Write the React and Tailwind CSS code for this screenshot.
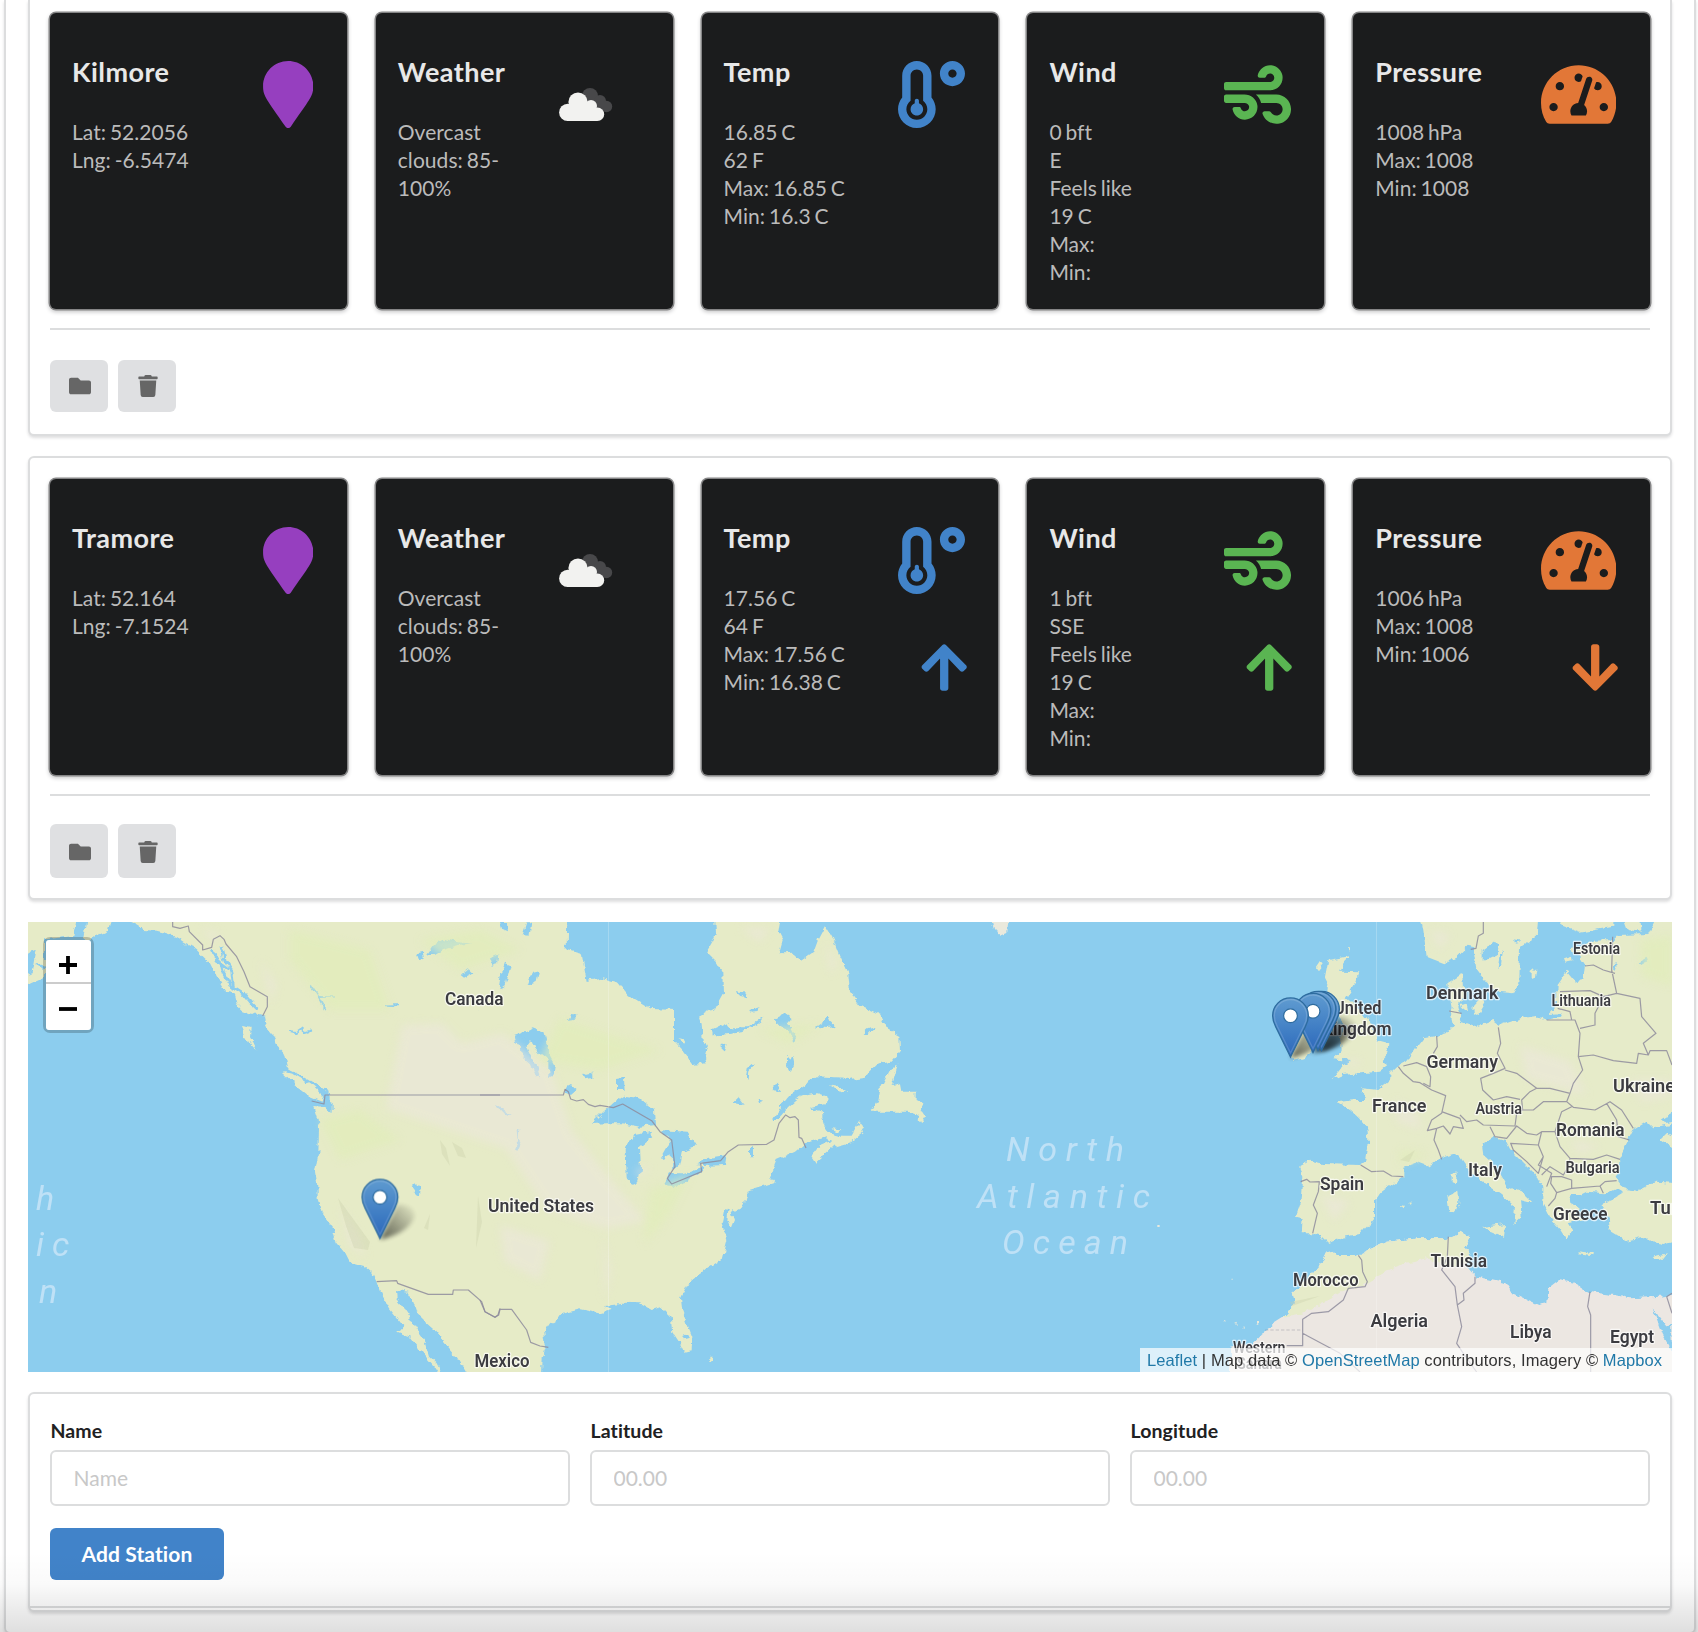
import React from "react";
import {
  FaArrowDown,
  FaArrowUp,
  FaFolder,
  FaMapMarker,
  FaTachometerAlt,
  FaTemperatureLow,
  FaTrash,
  FaWind,
} from "react-icons/fa";

const stations = [
  {
    name: "Kilmore",
    panel: "h-[436px] border-t-0 pt-[13px] rounded-b-[6px]",
    actions: "mt-[30px] h-[52px]",
    icon: "",
    location: ["Lat: 52.2056", "Lng: -6.5474"],
    temp: ["16.85 C", "62 F", "Max: 16.85 C", "Min: 16.3 C"],
    wind: ["0 bft", "E", "Feels like", "19 C", "Max:", "Min:"],
    pressure: ["1008 hPa", "Max: 1008", "Min: 1008"],
    trends: false,
  },
  {
    name: "Tramore",
    panel: "mt-5 h-[444px] pt-[21px] rounded-[6px]",
    actions: "mt-[28px] h-[54px]",
    icon: "mt-[2px]",
    location: ["Lat: 52.164", "Lng: -7.1524"],
    temp: ["17.56 C", "64 F", "Max: 17.56 C", "Min: 16.38 C"],
    wind: ["1 bft", "SSE", "Feels like", "19 C", "Max:", "Min:"],
    pressure: ["1006 hPa", "Max: 1008", "Min: 1006"],
    trends: true,
  },
];

const weather = ["Overcast", "clouds: 85-", "100%"];

function CloudIcon() {
  return (
    <svg viewBox="0 0 54 34" className="mt-[27px] mr-[26px] h-[34px] w-[54px]">
      <g fill="#48484a">
        <circle cx="31" cy="8" r="8" />
        <circle cx="41" cy="13" r="6" />
        <circle cx="47.5" cy="18.5" r="5.7" />
        <path d="M30 12h14v12H30z" />
      </g>
      <g fill="#f2f2f0">
        <circle cx="19" cy="14" r="9.6" />
        <circle cx="8.7" cy="24.4" r="8.6" />
        <circle cx="32" cy="18" r="6" />
        <circle cx="38.4" cy="26.2" r="6.8" />
        <path d="M8 16h22l8 10v7H8z" />
      </g>
    </svg>
  );
}

function Card({ title, lines, icon, trend }) {
  return (
    <div className="flex h-[296px] justify-between rounded-[6px] bg-[#1b1c1d] pl-[22px] pr-[33.5px] shadow-[0_0_0_1.5px_#858586,0_2px_4px_1px_#c4c4c5]">
      <div className="pt-[41px]">
        <h2 className="text-[27px] leading-[35px] font-bold tracking-[0.45px] text-[#e8e8e8]">{title}</h2>
        <div className="mt-[29px] text-[21px] leading-[28px] [word-spacing:-1.6px] tracking-[0.05px] whitespace-nowrap text-[#bbbbbb]">
          {lines.map((line) => (
            <p key={line}>{line}</p>
          ))}
        </div>
      </div>
      <div className="flex flex-col items-end pt-[48px]">
        {icon}
        {trend}
      </div>
    </div>
  );
}

function Station({ s }) {
  return (
    <section className={`border-2 border-[#dcddde] bg-white px-5 shadow-[0_2px_3px_0_rgba(34,36,38,0.15)] ${s.panel}`}>
      <div className="grid grid-cols-5 gap-[29px]">
        <Card title={s.name} lines={s.location} icon={<FaMapMarker className="h-[67px] w-[50.4px] text-[#963fbf]" />} />
        <Card title="Weather" lines={weather} icon={<CloudIcon />} />
        <Card
          title="Temp"
          lines={s.temp}
          icon={<FaTemperatureLow className="h-[67px] w-[67px] text-[#4183c9]" />}
          trend={s.trends && <FaArrowUp className="-mr-[2px] mt-[47px] h-[53px] w-[46.4px] text-[#4183c9]" />}
        />
        <Card
          title="Wind"
          lines={s.wind}
          icon={<FaWind className="h-[67px] w-[67px] text-[#5ab552]" />}
          trend={s.trends && <FaArrowUp className="-mr-[2px] mt-[47px] h-[53px] w-[46.4px] text-[#5ab552]" />}
        />
        <Card
          title="Pressure"
          lines={s.pressure}
          icon={<FaTachometerAlt className="h-[67px] w-[75.4px] text-[#e27737]" />}
          trend={s.trends && <FaArrowDown className="-mr-[2px] mt-[47px] h-[53px] w-[46.4px] text-[#e27737]" />}
        />
      </div>
      <div className="mt-[19px] h-[2px] bg-[#dcddde]" />
      <div className={`flex gap-[10px] ${s.actions}`}>
        {[FaFolder, FaTrash].map((Icon, i) => (
          <button
            key={i}
            className="flex w-[58px] items-center justify-center rounded-[6px] bg-[#dfe0e2] pl-[1px] text-[#666666]"
          >
            <Icon className={`h-[22px] w-[22px] ${s.icon}`} />
          </button>
        ))}
      </div>
    </section>
  );
}

/* Country labels: text, left, right, baseline, font size */
const labels = [
  ["Canada", 445, 503.5, 1004.500, 19],
  ["United States", 488, 594, 1211.500, 19],
  ["Mexico", 474.5, 529.5, 1367, 19],
  ["Estonia", 1573, 1620, 954, 16],
  ["Denmark", 1426, 1498.5, 999, 19],
  ["Lithuania", 1551.5, 1611, 1006, 16],
  ["United", 1334, 1381.5, 1014, 19],
  ["Kingdom", 1322, 1391.5, 1035, 19],
  ["Germany", 1426.5, 1498, 1068, 19],
  ["Ukraine", 1613, 1675, 1092, 19],
  ["France", 1372, 1426.5, 1111.5, 19],
  ["Austria", 1475.5, 1522, 1114, 16],
  ["Romania", 1556, 1624.5, 1136, 19],
  ["Italy", 1468, 1502, 1176, 19],
  ["Bulgaria", 1565.5, 1619.5, 1173, 16],
  ["Spain", 1320, 1364, 1190, 19],
  ["Greece", 1553, 1607.5, 1220, 19],
  ["Turkey", 1650, 1706, 1214, 19],
  ["Tunisia", 1430.5, 1487, 1267, 19],
  ["Morocco", 1293, 1358.5, 1285.5, 19],
  ["Algeria", 1370.5, 1428, 1327, 19],
  ["Libya", 1510, 1551.5, 1337.5, 19],
  ["Egypt", 1610, 1654, 1343, 19],
  ["Western", 1233, 1285.5, 1353, 16],
  ["Sahara", 1237, 1282, 1369, 16],
];

const oceanLabels = [
  ["North", 1006, 1124, 1160.5],
  ["Atlantic", 977, 1150, 1207.5],
  ["Ocean", 1002, 1128, 1254],
];

function Pin({ x, y }) {
  return (
    <g transform={`translate(${x - 18.75} ${y - 61}) scale(1.5)`}>
      <path
        d="M12.5.6C5.9.6.6 5.9.6 12.5c0 2.800.8 5 2 7.300L12.5 40l9.900-20.200c1.200-2.300 2-4.500 2-7.300C24.400 5.900 19.100.6 12.500.6z"
        fill="url(#pinFill)"
        stroke="#2e6c9f"
        strokeWidth="0.9"
      />
      <path
        d="M12.5 1.700C6.500 1.700 1.700 6.500 1.700 12.500c0 2.600.7 4.700 1.900 6.800l8.900 18 8.900-18c1.200-2.100 1.900-4.200 1.900-6.800 0-6-4.800-10.800-10.800-10.800z"
        fill="none"
        stroke="#fff"
        strokeOpacity="0.15"
        strokeWidth="0.9"
      />
      <circle cx="12.5" cy="12.500" r="4.600" fill="#fff" stroke="#2e6c9f" strokeWidth="0.8" />
    </g>
  );
}

function PinShadow({ x, y }) {
  return (
    <path
      transform={`translate(${x} ${y})`}
      d="M0 0L17-34C28-36 36-30 34-22C30-10 14-3 0 0z"
      fill="url(#shade)"
      filter="url(#soft)"
    />
  );
}

function WorldMap() {
  const pins = [
    [1321.500, 1051.500],
    [1318, 1051.500],
    [1313, 1053.500],
    [1290.500, 1058],
    [380, 1239.500],
  ];
  return (
    <svg viewBox="28 922 1644 450" className="block h-[450px] w-[1644px]">
      <defs>
        <linearGradient id="pinFill" x1="0" y1="0" x2="0" y2="1">
          <stop offset="0" stopColor="#5f9bd0" />
          <stop offset="0.6" stopColor="#3f7dc4" />
          <stop offset="1" stopColor="#2d67ba" />
        </linearGradient>
        <linearGradient id="shade" x1="0" y1="1" x2="0.9" y2="0.1">
          <stop offset="0" stopColor="#000" stopOpacity="0.75" />
          <stop offset="1" stopColor="#000" stopOpacity="0.08" />
        </linearGradient>
        <filter id="soft" x="-50%" y="-50%" width="200%" height="200%">
          <feGaussianBlur stdDeviation="2" />
        </filter>
        <filter id="haze" x="-20%" y="-20%" width="140%" height="140%">
          <feGaussianBlur stdDeviation="4" />
        </filter>
        <filter id="coast" filterUnits="userSpaceOnUse" x="0" y="0" width="1700" height="1500">
          <feTurbulence type="fractalNoise" baseFrequency="0.12" numOctaves="3" seed="4" />
          <feDisplacementMap in="SourceGraphic" scale="7" xChannelSelector="R" yChannelSelector="G" />
        </filter>
      </defs>
      <rect x="28" y="922" width="1644" height="450" fill="#8ccdee" />

      <g filter="url(#coast)">
        {/* Western North America */}
        <g transform="translate(20 910) scale(.33333)" fill="#e6ebc7">
          <path d="M330 20L345 45 370 60 410 62 440 70 465 78 490 95 510 105 530 120 550 140 570 160 585 190 600 215 618 245 640 250 650 285 665 300 690 310 725 318 735 350 760 380 770 405 790 425 800 470 830 490 865 510 920 545 938 580 938 612 915 590 880 588 893 630 897 660 895 730 885 785 893 830 893 870 905 908 935 945 950 1000 975 1030 988 1055 1035 1068 1060 1090 1070 1110 1085 1150 1110 1195 1150 1245 1132 1265 1170 1280 1200 1320 1240 1365 1262 1400 1270 1400 1250 1360 1230 1340 1215 1290 1190 1255 1170 1220 1150 1190 1130 1165 1128 1140 1165 1145 1180 1170 1195 1215 1240 1255 1275 1300 1310 1340 1345 1400 1440 1400 1440 20z" />
          <path d="M785 488l25-3 40 25 30 20 32 30-4 15-38-15-50-40zM663 345l29 5-2 35 10 15 12 25-22-25-15-25z" />
          <path d="M0 20H172L160 75 120 80 75 85V200L0 235zM200 20H275L265 62 230 75 205 95 190 85z" />
          <path d="M24 125l26-5-12 70-38 10zM50 160l26 8-8 12z" fill="#8ccdee" />
          <g fill="none" stroke="#8ccdee" strokeWidth="9" strokeLinejoin="round">
            <path d="M570 125l30 25 10 40 30 50M603 105l12 45 20 30 5 50 30 20 25 30 20 20M585 150l40 30M700 310l40 50 15 18M790 480l35 8M870 515l45 30M728 320l8 40" />
            <path d="M872 222l20 30 24 45M895 258h50M1098 286h36M805 363l25 3 12-8 14 12 20-6" strokeWidth="6" />
          </g>
          <g fill="#8ccdee">
            <path d="M1222 135l20-30 30-18 40 10 48 6-50 5-40 12-25 15zM1190 130l18-5 4 20-14 8zM1325 195l20-16 12 12-22 12zM1400 40l15-4-8 16zM1415 150l25-20v35l-20-4zM1375 300l20-14 8 14-14 10zM1430 215h12v25h-12zM1172 828l12-8 4 12 14 2-2 22-12-3-8-15z" />
          </g>
        </g>
        {/* Eastern North America */}
        <g transform="translate(480 910) scale(.33333)" fill="#e6ebc7">
          <path d="M-5 20H262L260 120 305 132 320 213 360 203 415 218 445 255 515 297 582 300V395L610 425 640 465 672 460 682 420 668 390 665 345 657 320 710 290 732 250 730 190 710 155 680 125 700 90 708 70 705 20H902L895 65 908 90 897 130 935 128 960 152 1000 125 1015 85 1035 48 1060 90 1080 140 1105 190 1110 245 1145 290 1200 315 1222 355 1258 375 1260 425 1235 455 1190 465 1155 500 1110 507 1010 502 970 525 935 550 905 585 878 630 888 630 925 590 960 560 1010 550 1040 560 1038 580 990 592 1025 605 1030 640 1050 670 1085 680 1115 680 1140 635 1152 665 1115 695 1060 710 1010 755 997 735 1020 705 1055 690 1035 682 975 700 945 725 890 750 870 800 885 820 800 845 790 890 762 905 752 900 762 930 752 955 742 930 745 905 733 900 725 940 735 970 742 990 728 1045 680 1075 625 1120 603 1165 607 1200 625 1250 637 1280 635 1320 612 1325 600 1300 580 1270 575 1220 545 1190 515 1200 480 1180 430 1178 375 1185 395 1200 360 1210 300 1198 255 1210 210 1240 190 1270 195 1310 185 1340 183 1400H-5z" />
          <path d="M1255 457L1240 510 1235 525 1260 520 1265 545 1310 545 1310 570 1330 580 1325 600 1338 620 1325 640 1310 610 1280 605 1175 605 1195 570 1200 540 1225 490zM1043 523l32 5 30 17-20 2zM1057 655l30 3-10 8zM592 388l25 3-5 8zM688 1340h8v14h-8z" />
          <g fill="#8ccdee">
            <path d="M333 642L370 605 405 575 430 557 480 565 522 600 525 645 480 650 425 640 380 640z" />
            <path d="M437 720L460 675 515 665V680L480 710 483 780 475 815 455 825 440 800z" />
            <path d="M540 660L620 665 648 712 605 725 597 770 577 775 575 730 545 750 540 745 560 710 575 690z" />
            <path d="M553 820L570 790 605 790 670 770 665 785 595 830 560 830zM650 765L680 745 740 735 735 765 670 768z" />
            <path d="M102 375L130 365 155 352 190 365 205 420 225 460 220 500 205 500 205 450 175 425 150 390 135 410 150 440 170 470 180 505 165 500 150 460 128 440 125 405 105 400z" />
            <path d="M75 158l17 8-15 60-22 15 8-50zM30 145l28-12-4 30-16 4zM160 185l18-4-8 35-30 12 6-18zM128 75l12-38h14l-6 40zM60 36h20l4 28-18-8zM260 330l12-18 22 2-20 14zM408 510l24-4 2 34h-26zM255 530l15-8 20 18-20 18-15-6zM305 490l14 4 18-4v14l-20 4zM765 243l30 5 4 14-18-4zM808 300l30-8-2 14-24 2zM698 360l30-14 14-6 8 12 50 0 50-28-10 14-50 28-60 8-28 2zM885 325l30-15 20 14-12 14 28 46-8 14-18-35-38-22zM1008 350l25-18 10-14 8 18 16 14-30 4zM1148 372l14-14 28-10-24 24zM725 405l18-5-8 24-10-4zM795 500l6-30 24-8-20 22-2 22zM918 440l12 14 8-20 6 30-12 22-14-26zM872 535l14-14 18 22-26-2zM757 575l18-15 16 22-20-4zM838 565l14 4-8 12zM610 1278l12-6 6 12-14 4z" />
            <path d="M45 585l12 4 14 12 24 10-20 5-14-16zM110 660l8-2-2 28 8 14-6 26-14-8 10-20zM810 706h6v36h-6z" />
          </g>
        </g>
        {/* Islands of the Atlantic */}
        <g transform="translate(940 910) scale(.33333)" fill="#eae9dc">
          <path d="M152 20H206L202 66 182 74 162 64zM652 948h10v6h-10zM872 1106h6v6h-6zM850 1228h6v6h-6zM882 1242l8-4v6zM908 1250h6v6h-6zM950 1236h5v8h-5z" />
        </g>
        {/* Europe and North Africa */}
        <g transform="translate(1260 910) scale(.33333)" fill="#e6ebc9">
          <path d="M117 770L150 752 190 762 300 765 315 755 325 690 322 655 297 625 270 600 230 577 285 570 312 570 307 535 355 540 390 510 392 490 415 468 445 450 470 410 490 385 530 378 560 370 580 345 572 310 575 290 562 220 610 190 612 240 595 290 605 335 650 350 700 330 720 345 780 325 830 318 860 330 900 320 905 310 865 312 890 290 893 225 920 185 945 215 970 210 975 165 945 120 1000 92 1060 90 1075 75 1165 72 1190 20 1260 20V640L1180 655 1160 635 1120 660 1105 690 1080 740 1082 780 1070 800 1098 838 1135 842 1190 815 1260 820V990L1210 1005 1180 1000 1160 980 1100 995 1050 965 1045 920 1020 880 1060 865 1090 846 1070 835 1040 850 980 845 960 855 930 855 935 880 960 900 945 915 970 930 925 940 940 965 920 990 895 950 870 920 850 880 850 830 820 790 790 760 750 720 735 690 700 680 665 700 670 735 700 760 740 830 790 850 820 880 780 870 785 920 760 945 765 890 720 850 660 810 610 760 590 730 540 745 510 770 470 755 430 770V800L365 845 345 870V920L300 975 240 985 205 1000 180 975 158 970 125 970 128 925 108 920 125 870 130 800z" />
          <path d="M482 20H835L830 80 780 110 778 220 760 250 715 245 680 220 650 180 640 115 620 110 590 140 550 160 500 140 490 60zM890 20H1060V50L960 68 910 50zM1085 20H1140L1145 65 1100 60z" />
          <path d="M205 150L268 138 240 185 298 187 285 225 260 265 290 290 340 350 350 390 388 400 385 430 365 450 385 465 360 485 300 490 250 495 215 510 250 465 270 450 220 445 245 420 240 380 260 350 225 310 200 260 205 220 195 200z" />
          <path d="M95 350L130 320 175 330 170 380 155 425 130 445 100 452 88 430zM168 170l12-18 8 8-14 18zM262 112l8 0v10zM575 795l15-5-2 35-13-5zM562 855l30-13 3 38-10 30-17-5zM670 950l68-8-3 43-45-20zM952 1027l50 6-2 6-46-6zM1178 1040l40-10-14 18-22 4zM815 185l14-10-4 28-10 4zM600 285l20-4 4 18-18 4zM640 290l22-24 14 14-18 30-16 4zM418 888l14 2-4 8zM448 880l10 2-8 4zM912 145l24-8 2 14-22 4zM925 118l16-4-2 14zM1200 690l20-20 20 10v40z" />
          <g fill="#8ccdee">
            <path d="M668 120l34-25 12 14-6 26-24 12-16 8zM712 180l6-40 14-20-6 44zM762 88l24 4-20 6zM1138 155l22-12 4 16-14 4zM1205 630l40-25v30l-30 4zM1060 160l10 10-6 8z" />
          </g>
          <path fill="#ece7e2" d="M-90 1400V1310L-20 1300 5 1275 15 1255 70 1220 105 1180 98 1145 150 1100 185 1060 205 1018 230 1035 290 1035 380 995 480 985 560 985 600 968 630 985 615 1010 635 1040 615 1060 650 1100 740 1120 760 1150 835 1185 862 1180 865 1135 900 1108 940 1115 985 1145 1060 1155 1110 1165 1200 1160 1260 1150V1400z" />
          <path d="M70 1220L105 1180 98 1145 150 1100 185 1060 205 1018 230 1035 290 1035 380 995 480 985 560 985 600 968 630 985 615 1010 635 1040 615 1060 560 1070 500 1045 430 1060 350 1100 300 1130 250 1140 190 1180 130 1210z" />
          <path fill="#8ccdee" d="M1178 1195L1200 1225 1220 1250 1236 1240 1240 1330 1205 1270z" />
        </g>
      </g>

      {/* Terrain tints */}
      <g fill="#ece7dc" opacity="0.6" filter="url(#haze)">
        <path d="M402 1025l40-2 20 20 40-10 50 38 20 60 40 50 34 40-40 8-60-20-40-60-60-20-60-20z" />
        <path d="M340 1205l18 30 8 22-16-12zM200 928l20 6-6 8zM740 928l30 0-10 14zM825 940l12 24-6 10zM500 1225l50 16-10 40-36-20zM603 1235l8 36-6 30zM260 960l16 24-4 20zM635 1170l16-4-10 12z" />
        <path d="M1320 1195l30 6-16 20zM1520 1045l50 16 16 34-60-16zM1395 1100l20 10 8 20-26-8zM1630 1080l42 0v16l-30 6zM1345 1060l16 0-6 8zM1430 930l20 4-10 16zM1570 1140l30 6-20 8z" />
      </g>
      <g fill="#e1edba" opacity="0.7" filter="url(#haze)">
        <path d="M290 930l80 20 20 60-60 0-40-50zM560 1018l60 20 40 12-60 20-60-10zM320 1120l40-10 40 30-60 20zM650 1190l40-16-20 40-26 30zM420 940l60-10 40 20-60 20zM1640 940l32-4v50l-30-10zM760 1030l60-6-30 20zM1400 1150l30 4-30 10z" />
      </g>
      <g fill="#c9ceaa" opacity="0.35">
        <path d="M338 1198l16 22 16 22-2 8-14-2-8-22zM452 1142l10 6 4 10-8-2zM440 1140l6 8 4 18-8-12zM424 1228l6-14-2 16zM478 1196l4 26-6 26zM1290 1302l30-6-28 10zM1400 1160l15-10-6 12z" />
      </g>

      {/* Borders */}
      <g fill="none" stroke="#8e8c9c" strokeOpacity="0.85" strokeWidth="3.600" strokeLinejoin="round">
        <g transform="translate(20 910) scale(.33333)">
          <path d="M875 573L912 582 915 555H1440M458 36V50L480 55 505 48 508 65 548 105V120L575 112 580 88 600 77 612 88 618 102 650 140 672 185 690 230 742 260V290L728 318M1070 1115L1130 1112 1133 1120 1225 1153H1298L1300 1140H1345L1385 1175 1395 1205 1425 1222 1434 1215 1440 1195" />
        </g>
        <g transform="translate(480 910) scale(.33333)">
          <path d="M0 555H250L255 538 265 545 272 567 290 573 310 569 325 583 345 590 360 586 400 593 428 582 515 632 540 665 575 690 585 770 562 805 575 822 665 785 662 760 722 752 745 725 775 705 860 703 882 690 897 640 917 615 930 623 945 620 955 630 957 682 965 685 978 714M0 1170L15 1205 45 1222 56 1215 60 1198H95L140 1260 152 1297 180 1308 205 1312" />
        </g>
        <g transform="translate(1260 910) scale(.33333)">
          <path d="M122 815L140 808 150 816 178 815 175 845 160 885 172 910 158 970M302 765L335 785 370 783 395 798 430 800M670 36V70L655 78 648 115 632 118M415 470L430 490 460 515 480 518 515 540 557 557 545 610M430 468L470 458 500 470 512 500 510 530 490 520M530 378L532 410 520 430M567 303L605 310M715 352L722 400 712 430 735 475 700 490 662 505 668 540 700 570 740 560 780 568M735 480L770 490 790 505 830 535 810 545 785 570 788 600 765 610M830 535L870 535 930 550 920 575 850 575 820 600 788 600M860 330H945L960 370 955 440 968 480 940 520 930 550M545 610L515 630 502 662 530 655 550 648 570 672 580 650 610 655 600 625 545 605M600 615L620 635 650 630 670 645 765 648 770 610M530 655L522 690 535 720 545 748M690 650L705 680 740 685 770 648 800 670 830 675 845 665 885 665 905 605 935 590M920 575L940 592 1005 600 1050 575 1085 600 1120 655M1040 580L1070 630 1075 680 1108 690M885 665L900 710 930 745 1000 748 1040 735 1080 748M752 700L835 705 850 740 835 790 800 755 760 720zM845 665L835 705M850 740L835 765 875 790 860 830M875 800L905 800 935 810 935 835 890 848 872 820zM890 848L885 865 865 888M935 835L1020 828 1035 815 1070 812M1020 828L1030 850M845 795L870 770 910 795 925 770 930 745M955 440L1000 435 1060 452 1130 460 1135 430 1165 435 1170 422H1220L1236 465M1058 80L1055 180 1070 250 1140 265 1145 320 1188 370 1150 400 1165 435M975 168L1000 165 1030 180 1065 190M900 245L990 242 1030 260 1070 250M893 295L930 305 935 330M1030 262L1005 310 1005 345 960 355M295 1036L305 1050 308 1085 322 1115 315 1130 265 1135 250 1170 205 1205 155 1210 128 1228V1307H80M128 1270L240 1330 300 1386M565 980L562 1040 545 1080 585 1130 592 1185 605 1250 590 1300 610 1330 650 1386M645 1100V1120L610 1150 612 1170 592 1185M990 1145L983 1190 992 1215V1386M1236 1150L1220 1160 1236 1210" />
          <path d="M15 1260H128" strokeDasharray="10 6" strokeOpacity="0.4" />
        </g>
      </g>
      <path d="M608.500 922V1372M1376.500 922V1372" stroke="#fff" strokeOpacity="0.22" strokeWidth="1" />

      {/* Ocean names */}
      <g fill="#bfe1f6" fontFamily="Roboto, sans-serif" fontWeight="400" fontStyle="italic" fontSize="34">
        {oceanLabels.map(([text, x1, x2, y]) => (
          <text key={text} x={x1} y={y} textLength={x2 - x1} lengthAdjust="spacing">
            {text}
          </text>
        ))}
        <text x="36" y="1209.500">h</text>
        <text x="36" y="1256">i</text>
        <text x="52" y="1256">c</text>
        <text x="39" y="1303">n</text>
      </g>

      {/* Country names */}
      <g
        fill="#3c3c41"
        stroke="#fff"
        strokeOpacity="0.7"
        strokeWidth="2.500"
        paintOrder="stroke"
        strokeLinejoin="round"
        fontFamily="Roboto, sans-serif"
        fontWeight="600"
      >
        {labels.map(([text, x1, x2, y, size]) => (
          <text key={text} x={x1} y={y} fontSize={size} textLength={x2 - x1} lengthAdjust="spacingAndGlyphs">
            {text}
          </text>
        ))}
      </g>

      <g opacity="0.8">
        {pins.map(([x, y]) => (
          <PinShadow key={x} x={x} y={y} />
        ))}
      </g>
      {pins.map(([x, y]) => (
        <Pin key={x} x={x} y={y} />
      ))}
    </svg>
  );
}

function MapPanel() {
  return (
    <section className="relative mt-[22px] h-[450px] w-[1644px] overflow-hidden">
      <WorldMap />
      <div className="absolute top-[15px] left-[15px] w-[51px] rounded-[7px] border-[3px] border-black/20 bg-clip-padding">
        <button className="flex h-[42px] w-full items-center justify-center rounded-t-[3px] bg-white pt-[8px] pr-[1px]">
          <svg viewBox="0 0 18 18" className="h-[18px] w-[18px]">
            <path d="M0 9h18M9 0v18" stroke="#000" strokeWidth="3.800" />
          </svg>
        </button>
        <button className="flex h-[48px] w-full items-center justify-center rounded-b-[3px] border-t-2 border-[#cccccc] bg-white pr-[1px] pt-[4px]">
          <svg viewBox="0 0 18 18" className="h-[18px] w-[18px]">
            <path d="M0 9h18" stroke="#000" strokeWidth="3.800" />
          </svg>
        </button>
      </div>
      <p className="absolute right-0 bottom-0 h-6 w-[532px] bg-white/70 pl-[7px] font-['Liberation_Sans',sans-serif] text-[16.5px] leading-[24px] tracking-[0.09px] whitespace-nowrap text-[#333333]">
        <span className="text-[#2079a8]">Leaflet</span> | Map data © <span className="text-[#2079a8]">OpenStreetMap</span>{" "}
        contributors, Imagery © <span className="text-[#2079a8]">Mapbox</span>
      </p>
    </section>
  );
}

function Field({ label, placeholder }) {
  return (
    <label className="block">
      <span className="block h-[31px] pl-[0.5px] text-[19.5px] leading-[24px] font-bold tracking-[0.1px] text-[#212122]">
        {label}
      </span>
      <input
        placeholder={placeholder}
        className="block h-[56px] w-full rounded-[6px] border-2 border-[#dcddde] bg-white px-[21.5px] pb-[2px] text-[21px] text-[#212122] outline-none placeholder:text-[#c8c8c8]"
      />
    </label>
  );
}

function StationForm() {
  return (
    <section className="mt-5 flex h-[220px] flex-col rounded-[6px] border-2 border-[#dcddde] bg-white pt-[25px] shadow-[0_2px_3px_0_rgba(34,36,38,0.15)]">
      <div className="grid grid-cols-3 gap-5 px-5">
        <Field label="Name" placeholder="Name" />
        <Field label="Latitude" placeholder="00.00" />
        <Field label="Longitude" placeholder="00.00" />
      </div>
      <button className="mt-[22px] ml-5 h-[52px] w-[174px] rounded-[6px] bg-[#4183c9] text-[21px] font-bold tracking-[0.1px] text-white">
        Add Station
      </button>
      <div className="mt-auto mb-[2px] h-[2px] bg-[#dcddde]" />
    </section>
  );
}

export default function App() {
  return (
    <main className="relative h-[1632px] w-[1698px] overflow-hidden bg-white font-['Lato',sans-serif]">
      <div className="ml-[4px] h-[1634px] w-[1692px] rounded-b-[6px] border-2 border-t-0 border-[#dcddde] px-[22px] shadow-[0_2px_3px_0_rgba(34,36,38,0.15)]">
        {stations.map((s) => (
          <Station key={s.name} s={s} />
        ))}
        <MapPanel />
        <StationForm />
      </div>
      <div className="pointer-events-none absolute inset-x-0 bottom-0 h-[80px] bg-[linear-gradient(to_bottom,rgba(0,0,0,0),rgba(0,0,0,0.02)_40%,rgba(0,0,0,0.07)_68%,rgba(0,0,0,0.125))]" />
    </main>
  );
}
